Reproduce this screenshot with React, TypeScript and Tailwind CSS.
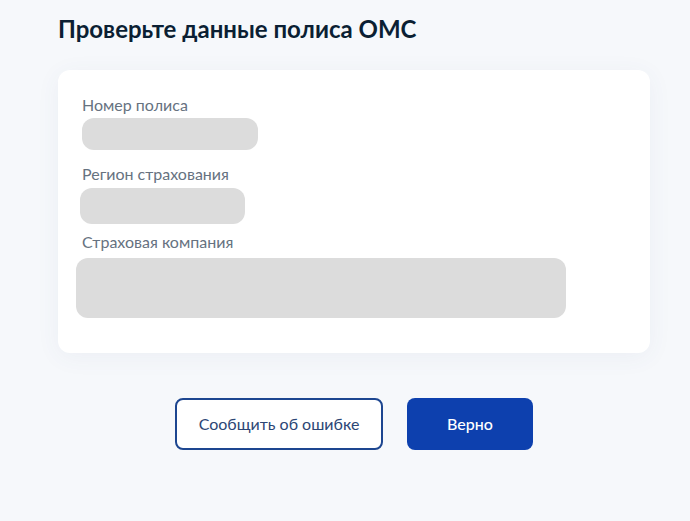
export default function App() {
  return (
    <div className="min-h-screen w-full bg-[#f6f8fb] font-['Lato',sans-serif]">
      <div className="w-[592px] ml-[58px] pt-[14px]">
        <h1 className="text-[24px] leading-[30px] font-bold text-[#0b1f33]">
          Проверьте данные полиса ОМС
        </h1>

        <div className="mt-[26px] h-[283px] rounded-[12px] bg-white shadow-[0_4px_24px_rgba(60,90,140,0.06)] pt-[25px] pl-[24px]">
          <p className="text-[16px] leading-[20px] text-[#66727f]">Номер полиса</p>
          <div className="mt-[3px] h-[32px] w-[176px] rounded-[12px] bg-[#dcdcdc]" />

          <p className="mt-[14px] text-[16px] leading-[20px] text-[#66727f]">Регион страхования</p>
          <div className="mt-[4px] -ml-[2px] h-[36px] w-[165px] rounded-[12px] bg-[#dcdcdc]" />

          <p className="mt-[8px] text-[16px] leading-[20px] text-[#66727f]">Страховая компания</p>
          <div className="mt-[6px] -ml-[6px] h-[60px] w-[490px] rounded-[12px] bg-[#dcdcdc]" />
        </div>

        <div className="mt-[45px] flex justify-center gap-[24px]">
          <button className="h-[52px] w-[208px] rounded-[8px] border-2 border-[#1d4690] bg-white text-[16px] text-[#2c4675]">
            Сообщить об ошибке
          </button>
          <button className="h-[52px] w-[126px] rounded-[8px] bg-[#0d40ae] text-[16px] font-medium text-white">
            Верно
          </button>
        </div>
      </div>
    </div>
  );
}
